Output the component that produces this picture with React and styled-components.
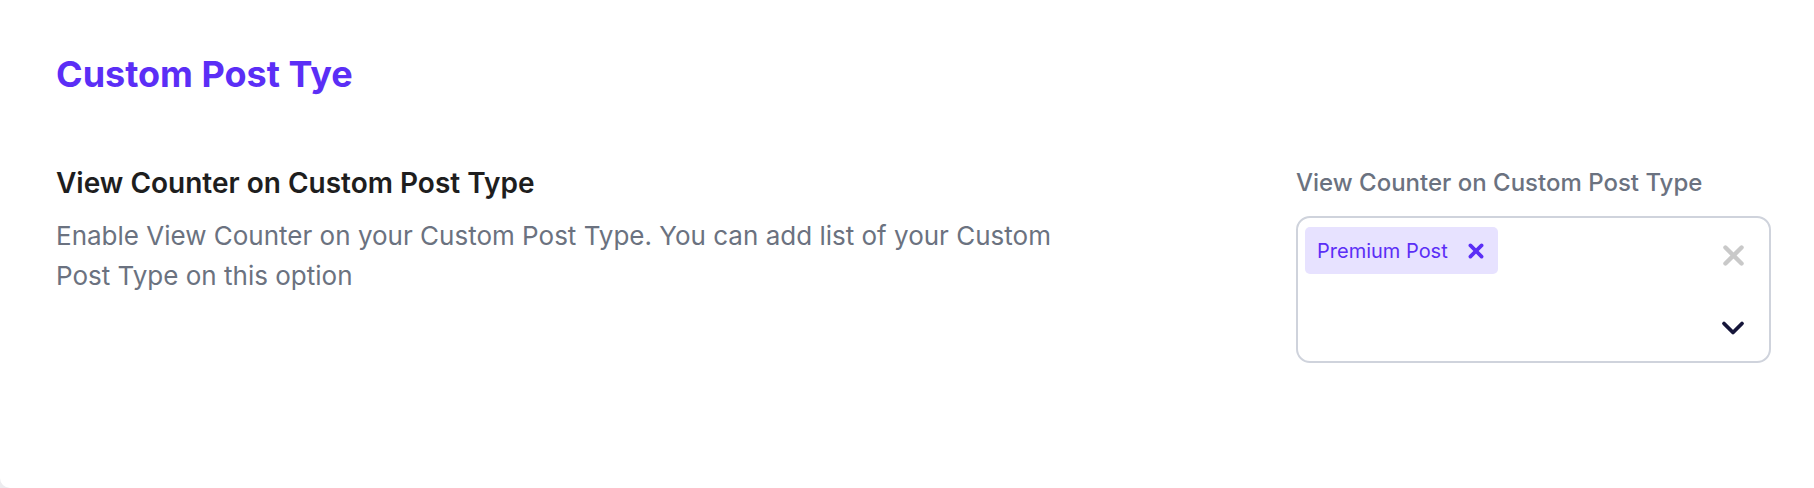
import React, { useState } from "react";
import styled, { createGlobalStyle } from "styled-components";

const GlobalStyle = createGlobalStyle`
  html, body {
    margin: 0;
    padding: 0;
    background: #ececef;
  }
  body {
    font-family: Inter, "Noto Sans", "Liberation Sans", sans-serif;
  }
`;

const Card = styled.div`
  box-sizing: border-box;
  height: 488px;
  background: #ffffff;
  border-radius: 0 0 0 10px;
  padding: 52px 43px 0 56px;
`;

const Title = styled.h2`
  margin: 0;
  font-size: 36px;
  line-height: 44px;
  font-weight: 700;
  color: #5b2ef6;
`;

const Row = styled.div`
  display: grid;
  grid-template-columns: 1fr 475px;
  column-gap: 40px;
  margin-top: 70px;
`;

const Info = styled.div`
  display: flex;
  flex-direction: column;
  max-width: 1010px;
`;

const Heading = styled.h3`
  margin: 0;
  font-size: 28px;
  line-height: 34px;
  font-weight: 600;
  color: #1e1e1e;
`;

const Description = styled.p`
  margin: 16px 0 0;
  font-size: 26px;
  line-height: 40px;
  font-weight: 400;
  color: #6b7280;
`;

const Field = styled.div`
  display: flex;
  flex-direction: column;
  gap: 16px;
`;

const Label = styled.label`
  font-size: 24px;
  line-height: 34px;
  font-weight: 500;
  color: #6b7280;
`;

const Control = styled.div`
  box-sizing: border-box;
  height: 147px;
  display: flex;
  border: 2px solid #cfd3dc;
  border-radius: 14px;
  background: #ffffff;
  padding: 9px 0 7px 7px;
`;

const Values = styled.div`
  flex: 1;
  display: flex;
  flex-wrap: wrap;
  align-content: flex-start;
  gap: 8px;
`;

const Chip = styled.span`
  display: inline-flex;
  align-items: center;
  gap: 20px;
  height: 47px;
  padding: 0 14px 0 12px;
  border-radius: 5px;
  background: #e7e2ff;
  color: #5b2ef6;
  font-size: 20px;
  font-weight: 400;
`;

const IconButton = styled.button`
  display: flex;
  align-items: center;
  justify-content: center;
  width: ${({ small }) => (small ? "16px" : "72px")};
  height: ${({ small }) => (small ? "16px" : "40px")};
  padding: 0;
  border: none;
  background: transparent;
  cursor: pointer;
  color: ${({ tone }) => tone};
`;

const Indicators = styled.div`
  display: flex;
  flex-direction: column;
  justify-content: space-between;
  padding: 8px 0 6px;
`;

const Cross = ({ size, stroke }) => (
  <svg width={size} height={size} viewBox="0 0 20 20" fill="none">
    <path
      d="M3 3L17 17M17 3L3 17"
      stroke="currentColor"
      strokeWidth={stroke}
      strokeLinecap="round"
    />
  </svg>
);

const Chevron = () => (
  <svg width="24" height="16" viewBox="0 0 24 16" fill="none">
    <path
      d="M3 3.5L12 12.5L21 3.5"
      stroke="currentColor"
      strokeWidth="3.8"
      strokeLinecap="round"
      strokeLinejoin="round"
    />
  </svg>
);

export default function App() {
  const [types, setTypes] = useState(["Premium Post"]);

  return (
    <>
      <GlobalStyle />
      <Card>
        <Title>Custom Post Tye</Title>
        <Row>
          <Info>
            <Heading>View Counter on Custom Post Type</Heading>
            <Description>
              Enable View Counter on your Custom Post Type. You can add list of
              your Custom Post Type on this option
            </Description>
          </Info>
          <Field>
            <Label>View Counter on Custom Post Type</Label>
            <Control>
              <Values>
                {types.map((t) => (
                  <Chip key={t}>
                    {t}
                    <IconButton
                      as="span"
                      small
                      tone="#5b2ef6"
                      onClick={() => setTypes(types.filter((x) => x !== t))}
                    >
                      <Cross size={16} stroke={4.6} />
                    </IconButton>
                  </Chip>
                ))}
              </Values>
              <Indicators>
                <IconButton tone="#c9c9c9" onClick={() => setTypes([])}>
                  <Cross size={23} stroke={3.8} />
                </IconButton>
                <IconButton tone="#16163a">
                  <Chevron />
                </IconButton>
              </Indicators>
            </Control>
          </Field>
        </Row>
      </Card>
    </>
  );
}
